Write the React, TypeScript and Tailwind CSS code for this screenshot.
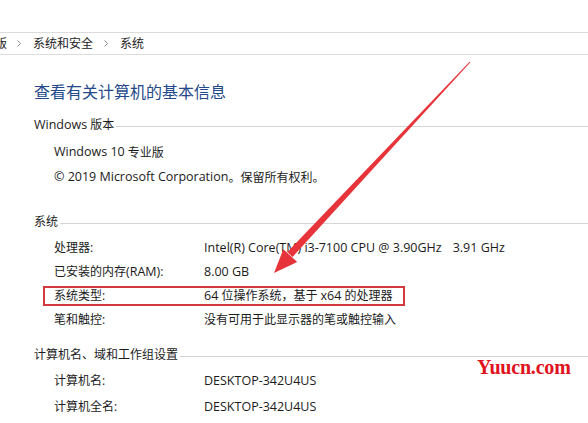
import React from 'react';

const font = { fontFamily: '"Open Sans", "Noto Sans CJK SC", sans-serif' };

// latin runs are set a touch larger than the CJK text, as in the source screenshot
function L({ children }: { children: React.ReactNode }) {
  return <span className="text-[12.5px]">{children}</span>;
}

function Crumb() {
  return (
    <svg width="4" height="7" viewBox="0 0 4 7" className="shrink-0">
      <path d="M0.5 0.5 L3.5 3.5 L0.5 6.5" fill="none" stroke="#8a8a8a" strokeWidth="1" />
    </svg>
  );
}

function Header({ children }: { children: React.ReactNode }) {
  return (
    <div className="flex items-center h-[20px] pl-[34px]">
      <span className="whitespace-nowrap">{children}</span>
      <div className="flex-1 h-px bg-[#d5d5d5] ml-[2px] mt-[3px]" />
    </div>
  );
}

function Row({ label, children }: { label: React.ReactNode; children: React.ReactNode }) {
  return (
    <div className="flex items-center h-[24px] pl-[54px]">
      <span className="w-[150px] shrink-0 whitespace-nowrap">{label}</span>
      <span className="whitespace-nowrap">{children}</span>
    </div>
  );
}

export default function App() {
  return (
    <div className="relative w-[588px] h-[423px] overflow-hidden bg-white text-[12px] text-[#1b1b1b]" style={font}>
      {/* breadcrumb */}
      <div className="mt-[32px] h-[23px] border-y border-[#dcdcdc] flex items-center text-[#222]">
        <span className="ml-[-5px]">版</span>
        <span className="ml-[10px]"><Crumb /></span>
        <span className="ml-[12px]">系统和安全</span>
        <span className="ml-[11px]"><Crumb /></span>
        <span className="ml-[12px]">系统</span>
      </div>

      <div className="mt-[25px] h-[24px] pl-[34px] flex items-center text-[16px] text-[#24498a]">
        查看有关计算机的基本信息
      </div>

      <div className="mt-[11px]">
        <Header><L>Windows</L> 版本</Header>
      </div>
      <div className="mt-[5px] h-[25px] pl-[54px] flex items-center"><L>Windows 10</L>&nbsp;专业版</div>
      <div className="h-[25px] pl-[54px] flex items-center">
        <L>© 2019 Microsoft Corporation</L>。保留所有权利。
      </div>

      <div className="mt-[22px]">
        <Header>系统</Header>
      </div>
      <div className="mt-[4px]">
        <Row label="处理器:">
          <L>Intel(R) Core(TM) i3-7100 CPU @ 3.90GHz</L>
          <span className="ml-[11px]"><L>3.91 GHz</L></span>
        </Row>
        <Row label={<>已安装的内存<L>(RAM)</L>:</>}><L>8.00 GB</L></Row>
        <div className="relative">
          <Row label="系统类型:"><L>64</L> 位操作系统，基于 <L>x64</L> 的处理器</Row>
          <div className="absolute left-[43px] w-[362px] top-[2px] h-[20px] border-2 border-[#d23a40]" />
        </div>
        <Row label="笔和触控:">没有可用于此显示器的笔或触控输入</Row>
      </div>

      <div className="mt-[13px]">
        <Header>计算机名、域和工作组设置</Header>
      </div>
      <div className="mt-[3px]">
        <div className="flex items-center h-[26px] pl-[54px]">
          <span className="w-[150px] shrink-0">计算机名:</span>
          <L>DESKTOP-342U4US</L>
        </div>
        <div className="flex items-center h-[26px] pl-[54px]">
          <span className="w-[150px] shrink-0">计算机全名:</span>
          <L>DESKTOP-342U4US</L>
        </div>
      </div>

      {/* annotation arrow */}
      <svg className="absolute left-0 top-0 pointer-events-none" width="588" height="423">
        <polygon points="470.4,62.3 469.6,61.7 287.4,252.1 292.6,256.9" fill="#e6343a" />
        <polygon points="274,273 283.4,249.2 297.2,261.9" fill="#e6343a" />
      </svg>

      {/* watermark */}
      <div
        className="absolute left-[477px] top-[357px] text-[20px] font-bold text-[#e0121c] leading-none tracking-[-0.2px]"
        style={{ fontFamily: '"Liberation Serif", serif' }}
      >
        Yuucn.com
      </div>
    </div>
  );
}
